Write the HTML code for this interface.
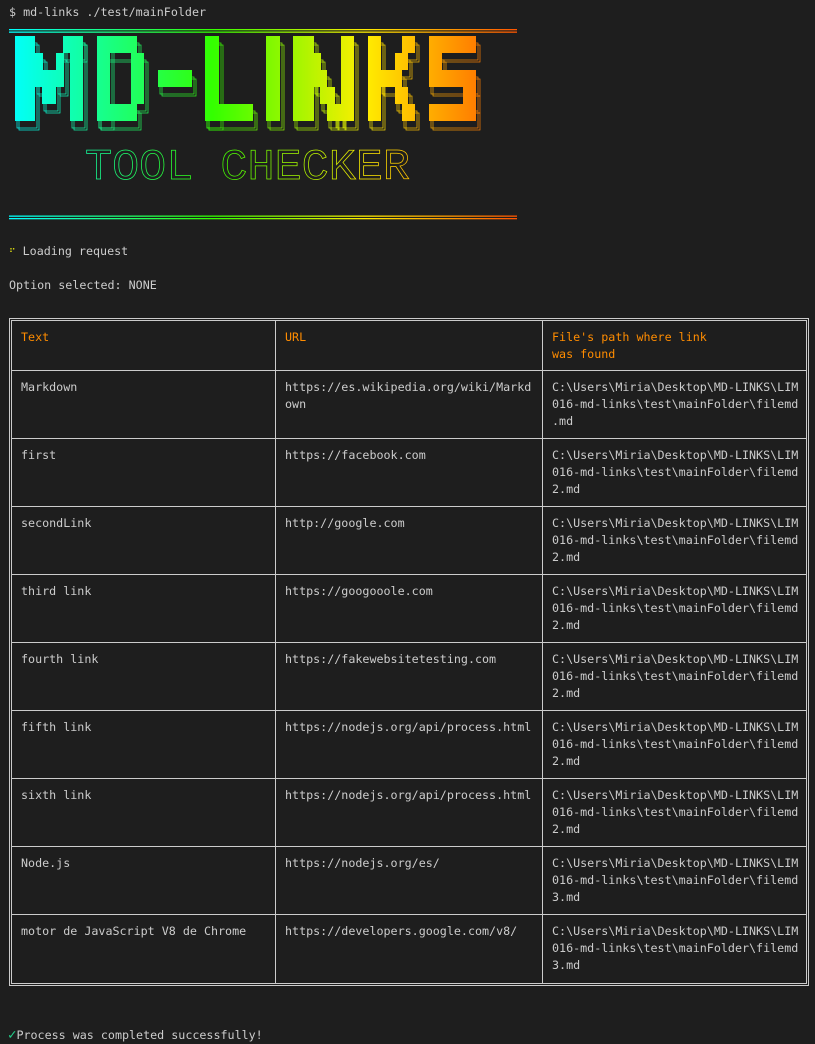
<!DOCTYPE html>
<html><head><meta charset="utf-8"><style>
body{margin:0;background:#1e1e1e;width:815px;height:1044px;overflow:hidden;font-family:"DejaVu Sans Mono","Liberation Mono",monospace;font-size:11.7px;color:#cccccc;position:relative}
.t{position:absolute;white-space:pre;line-height:17px}
table{position:absolute;left:9px;top:318px;width:800px;border:3px double #cccccc;border-collapse:separate;border-spacing:0;table-layout:fixed}
td{border-right:1px solid #ccc;border-bottom:1px solid #ccc;vertical-align:top;padding:8px 4px 0 9px;line-height:17px;height:68px;word-break:break-all;line-break:anywhere;overflow-wrap:anywhere;box-sizing:border-box}
tr td:last-child{border-right:none}
tr:last-child td{border-bottom:none}
th{color:#ff8c00;font-weight:normal;text-align:left;vertical-align:top;padding:8px 4px 0 9px;line-height:17px;height:50px;border-right:1px solid #ccc;border-bottom:1px solid #ccc;box-sizing:border-box}
th:last-child{border-right:none}
</style></head><body>
<div class="t" style="left:9px;top:4px">$ md-links ./test/mainFolder</div>
<svg style="position:absolute;left:0;top:0" width="540" height="230">
<defs><linearGradient id="g" gradientUnits="userSpaceOnUse" x1="9" y1="0" x2="517" y2="0">
<stop offset="0" stop-color="#00ffff"/><stop offset="0.4" stop-color="#33ff00"/><stop offset="0.7" stop-color="#ffee00"/><stop offset="1" stop-color="#ff5500"/></linearGradient>
<g id="L">
<rect x="15" y="36" width="20" height="85"/><rect x="35" y="53" width="8" height="34"/><rect x="42" y="70" width="14" height="34"/><rect x="56" y="53" width="8" height="34"/><rect x="63" y="36" width="20" height="17"/><rect x="70" y="36" width="13" height="85"/>
<rect x="97" y="36" width="40" height="17"/><rect x="97" y="36" width="13" height="85"/><rect x="97" y="104" width="40" height="17"/><rect x="131" y="53" width="13" height="51"/>
<rect x="158" y="70" width="34" height="17"/>
<rect x="205" y="36" width="14" height="85"/><rect x="205" y="104" width="48" height="17"/>
<rect x="266" y="36" width="14" height="85"/>
<rect x="293" y="36" width="21" height="85"/><rect x="313" y="53" width="8" height="34"/><rect x="320" y="70" width="7" height="34"/><rect x="327" y="87" width="8" height="34"/><rect x="334" y="104" width="8" height="17"/><rect x="341" y="36" width="13" height="85"/>
<rect x="368" y="36" width="13" height="85"/><rect x="380" y="70" width="22" height="17"/><rect x="395" y="53" width="13" height="17"/><rect x="395" y="87" width="13" height="17"/><rect x="402" y="36" width="13" height="17"/><rect x="402" y="104" width="13" height="17"/>
<rect x="429" y="36" width="47" height="17"/><rect x="429" y="53" width="13" height="17"/><rect x="429" y="70" width="47" height="17"/><rect x="463" y="87" width="13" height="17"/><rect x="429" y="104" width="47" height="17"/>
</g></defs>
<rect x="9" y="29" width="508" height="1.3" fill="url(#g)"/><rect x="9" y="31.5" width="508" height="1.3" fill="url(#g)"/>
<rect x="9" y="215.5" width="508" height="1.3" fill="url(#g)"/><rect x="9" y="218" width="508" height="1.3" fill="url(#g)"/>
<g fill="none" stroke="url(#g)" stroke-width="0.7"><use href="#L" transform="translate(2,7)"/><use href="#L" transform="translate(4,9)"/></g>
<use href="#L" fill="url(#g)"/>
<text x="85" y="181" font-family="Liberation Mono,monospace" font-size="48" textLength="325" lengthAdjust="spacingAndGlyphs" fill="none" stroke="url(#g)" stroke-width="0.8" transform="scale(1,0.9) translate(0,18)">TOOL  CHECKER</text>
</svg>
<div class="t" style="left:9px;top:243px"><span style="color:#e5e510;font-size:9px">⠋</span> Loading request</div>
<div class="t" style="left:9px;top:277px">Option selected: NONE</div>
<table>
<tr><th style="width:264px">Text</th><th style="width:267px">URL</th><th>File's path where link<br>was found</th></tr>
<tr><td>Markdown</td><td>https://es.wikipedia.org/wiki/Markdown</td><td>C:\Users\Miria\Desktop\MD-LINKS\LIM016-md-links\test\mainFolder\filemd.md</td></tr>
<tr><td>first</td><td>https://facebook.com</td><td>C:\Users\Miria\Desktop\MD-LINKS\LIM016-md-links\test\mainFolder\filemd2.md</td></tr>
<tr><td>secondLink</td><td>http://google.com</td><td>C:\Users\Miria\Desktop\MD-LINKS\LIM016-md-links\test\mainFolder\filemd2.md</td></tr>
<tr><td>third link</td><td>https://googooole.com</td><td>C:\Users\Miria\Desktop\MD-LINKS\LIM016-md-links\test\mainFolder\filemd2.md</td></tr>
<tr><td>fourth link</td><td>https://fakewebsitetesting.com</td><td>C:\Users\Miria\Desktop\MD-LINKS\LIM016-md-links\test\mainFolder\filemd2.md</td></tr>
<tr><td>fifth link</td><td>https://nodejs.org/api/process.html</td><td>C:\Users\Miria\Desktop\MD-LINKS\LIM016-md-links\test\mainFolder\filemd2.md</td></tr>
<tr><td>sixth link</td><td>https://nodejs.org/api/process.html</td><td>C:\Users\Miria\Desktop\MD-LINKS\LIM016-md-links\test\mainFolder\filemd2.md</td></tr>
<tr><td>Node.js</td><td>https://nodejs.org/es/</td><td>C:\Users\Miria\Desktop\MD-LINKS\LIM016-md-links\test\mainFolder\filemd3.md</td></tr>
<tr><td>motor de JavaScript V8 de Chrome</td><td>https://developers.google.com/v8/</td><td>C:\Users\Miria\Desktop\MD-LINKS\LIM016-md-links\test\mainFolder\filemd3.md</td></tr>
</table>
<div class="t" style="left:8px;top:1027px"><span style="color:#23d18b;font-size:14px">✓</span>Process was completed successfully!</div>
</body></html>
